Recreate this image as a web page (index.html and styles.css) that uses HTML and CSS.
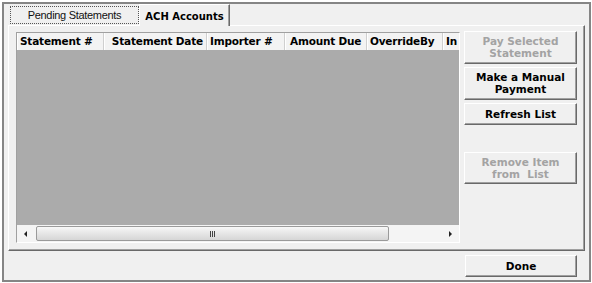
FILE: index.html
```html
<!DOCTYPE html>
<html lang="en">
<head>
   <meta charset="UTF-8">
   <title>ACH Accounts</title>
   <link rel="stylesheet" href="styles.css">
</head>
<body>
    <div class="window">
        <!-- Tab strip -->
        <div class="tabs">
            <div class="tab focus">Pending Statements</div>
            <div class="tab active">ACH Accounts</div>
        </div>

        <div class="panel">
            <div class="grid">
                <div class="grid-head">
                    <div class="col c1">Statement #</div>
                    <div class="col c2">Statement Date</div>
                    <div class="col c3">Importer #</div>
                    <div class="col c4">Amount Due</div>
                    <div class="col c5">OverrideBy</div>
                    <div class="col c6">In</div>
                </div>
                <div class="grid-body"></div>
                <div class="hscroll">
                    <div class="arrow-btn"><span class="arrow left"></span></div>
                    <div class="track">
                        <div class="thumb"><span class="grip"></span></div>
                    </div>
                    <div class="arrow-btn"><span class="arrow right"></span></div>
                </div>
            </div>

            <div class="actions">
                <button class="btn tall" disabled>Pay Selected<br>Statement</button>
                <button class="btn tall">Make a Manual<br>Payment</button>
                <button class="btn">Refresh List</button>
                <button class="btn tall spaced" disabled>Remove Item<br>from&nbsp; List</button>
            </div>
        </div>

        <div class="footer">
            <button class="btn done">Done</button>
        </div>
    </div>
</body>
</html>
```

FILE: styles.css
```css
* {
    box-sizing: border-box;
}
body {
    margin: 0;
    background-color: #fff;
    font-family: "Liberation Sans", Arial, sans-serif;
}
.window {
    width: 589px;
    height: 280px;
    margin: 2px 1px 1px 2px;
    border: 2px solid #858585;
    background-color: #f0f0f0;
    display: flex;
    flex-direction: column;
}

/* tabs */
.tabs {
    display: flex;
    align-items: flex-start;
    height: 22px;
    margin-bottom: -1px;
    padding-left: 6px;
    position: relative;
    z-index: 1;
}
.tab {
    display: flex;
    align-items: center;
    justify-content: center;
    white-space: nowrap;
}
.tab.focus {
    width: 129px;
    height: 18px;
    margin-top: 2px;
    border: 1px dotted #555;
    font-size: 11px;
    letter-spacing: -0.3px;
    color: #111;
}
.tab.active {
    width: 91px;
    height: 22px;
    padding-top: 1px;
    border-top: 1px solid #fff;
    border-left: 1px solid #fff;
    border-right: 1px solid #696969;
    box-shadow: inset -1px 0 0 #a0a0a0;
    background-color: #f0f0f0;
    font-family: "DejaVu Sans", sans-serif;
    font-weight: bold;
    font-size: 10px;
    color: #000;
}

/* panel */
.panel {
    height: 226px;
    margin: 0 4px;
    display: flex;
    gap: 4px;
    padding: 6px 4px 5px 7px;
    border-top: 1px solid #fff;
    border-left: 1px solid #fff;
    border-right: 1px solid #696969;
    border-bottom: 1px solid #696969;
    box-shadow: inset -1px -1px 0 #a0a0a0;
}

/* data grid */
.grid {
    width: 444px;
    height: 211px;
    flex: none;
    display: flex;
    flex-direction: column;
    border: 1px solid;
    border-color: #a0a0a0 #fff #fff #a0a0a0;
}
.grid-head {
    display: flex;
    height: 17px;
    background-color: #f3f3f3;
    overflow: hidden;
}
.col {
    flex: none;
    padding: 0 3px 0 3px;
    border-right: 1px solid #cfcfcf;
    box-shadow: inset 1px 0 0 #fff;
    font-family: "DejaVu Sans", sans-serif;
    font-weight: bold;
    font-size: 10.5px;
    letter-spacing: -0.2px;
    line-height: 17px;
    white-space: nowrap;
    overflow: hidden;
    color: #000;
}
.c1 { width: 87px; }
.c2 { width: 103px; text-align: right; }
.c3 { width: 78px; }
.c4 { width: 82px; padding-left: 5px; }
.c5 { width: 76px; }
.c6 { width: 16px; flex: 1; border-right: none; }
.grid-body {
    flex: 1;
    background-color: #ababab;
}
.hscroll {
    height: 17px;
    display: flex;
    align-items: center;
    background-color: #f4f4f4;
}
.arrow-btn {
    width: 17px;
    height: 17px;
    display: flex;
    align-items: center;
    justify-content: center;
}
.arrow {
    width: 0;
    height: 0;
    border-top: 3px solid transparent;
    border-bottom: 3px solid transparent;
}
.arrow.left {
    border-right: 3px solid #222;
}
.arrow.right {
    border-left: 3px solid #222;
}
.track {
    flex: 1;
    height: 17px;
    display: flex;
    align-items: center;
    padding-left: 2px;
}
.thumb {
    width: 353px;
    height: 15px;
    border: 1px solid #9a9a9a;
    border-radius: 2px;
    background: linear-gradient(#f7f7f7, #e6e6e6 50%, #d6d6d6);
    display: flex;
    align-items: center;
    justify-content: center;
}
.grip {
    width: 5px;
    height: 6px;
    background: repeating-linear-gradient(to right, #444 0 1px, transparent 1px 2px);
}

/* buttons */
.actions {
    width: 113px;
    display: flex;
    flex-direction: column;
    gap: 3px;
    margin-top: -1px;
}
.btn {
    width: 113px;
    height: 22px;
    padding: 0;
    border: 1px solid;
    border-color: #fff #696969 #696969 #fff;
    box-shadow: inset -1px -1px 0 #a0a0a0;
    background-color: #f0f0f0;
    font-family: "DejaVu Sans", sans-serif;
    font-weight: bold;
    font-size: 10.5px;
    line-height: 12px;
    color: #000;
    text-align: center;
}
.btn.tall {
    height: 33px;
    padding-bottom: 1px;
}
.btn.spaced {
    height: 32px;
    margin-top: 24px;
}
.btn:disabled {
    color: #a3a3a3;
}
.footer {
    display: flex;
    justify-content: flex-end;
    padding: 4px 12px 0 0;
}
.btn.done {
    width: 112px;
}
```
